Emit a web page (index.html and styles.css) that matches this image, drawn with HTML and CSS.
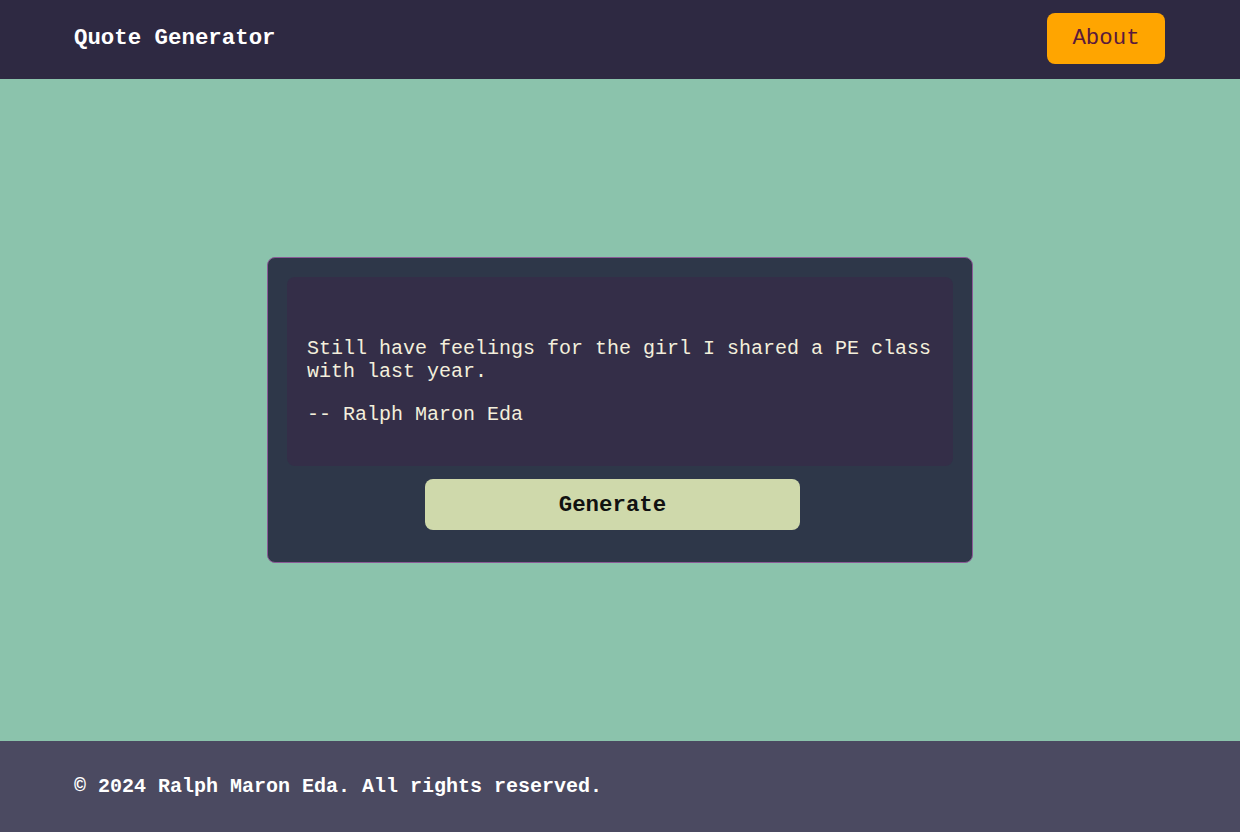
FILE: index.html
```html
<!DOCTYPE html>
<html lang="en">
<head>
<meta charset="utf-8">
<title>Quote Generator</title>
<link rel="stylesheet" href="styles.css">
</head>
<body>
<header class="topbar">
  <h1 class="brand">Quote Generator</h1>
  <button class="about-btn">About</button>
</header>
<main class="main">
  <section class="card">
    <div class="quote-box">
      <p class="quote-text">Still have feelings for the girl I shared a PE class with last year.</p>
      <p class="quote-author">-- Ralph Maron Eda</p>
    </div>
    <button class="gen-btn">Generate</button>
  </section>
</main>
<footer class="footer">
  <p class="copy">© 2024 Ralph Maron Eda. All rights reserved.</p>
</footer>
</body>
</html>
```

FILE: styles.css
```css
* { box-sizing: border-box; }
html, body { margin: 0; padding: 0; }
body {
  font-family: "Courier New", "Nimbus Mono PS", "Nimbus Mono L", "FreeMono", "Liberation Mono", monospace;
  height: 832px;
  display: flex;
  flex-direction: column;
  background: #8bc3ac;
}
.topbar {
  height: 79px;
  flex: none;
  background: #2e2942;
  display: flex;
  align-items: center;
  justify-content: space-between;
  padding: 0 75px 3px 74px;
}
.brand {
  margin: 0;
  font-size: 22.4px;
  font-weight: bold;
  color: #ffffff;
}
.about-btn {
  font-family: inherit;
  font-size: 22.4px;
  color: #5a1a3c;
  background: #ffa500;
  border: none;
  border-radius: 8px;
  width: 118px;
  height: 51px;
  padding: 0;
}
.main {
  flex: 1;
  display: flex;
  align-items: center;
  justify-content: center;
}
.card {
  width: 706px;
  height: 306px;
  background: #2e3749;
  border: 1px solid #8a5a96;
  border-radius: 8px;
  padding: 19px;
  display: flex;
  flex-direction: column;
  align-items: stretch;
}
.quote-box {
  height: 189px;
  background: #342e48;
  border-radius: 8px;
  padding: 40px 20px 20px;
}
.quote-text, .quote-author {
  margin: 20px 0 0;
  font-size: 20px;
  line-height: 23px;
  color: #f3efdc;
}
.gen-btn {
  align-self: flex-start;
  margin: 13px 0 0 138px;
  width: 375px;
  height: 51px;
  border: none;
  border-radius: 8px;
  background: #cfd9ab;
  font-family: inherit;
  font-size: 22.4px;
  font-weight: bold;
  color: #111111;
  padding: 0;
}
.footer {
  height: 91px;
  flex: none;
  background: #4b4a61;
  display: flex;
  align-items: center;
  padding: 0 74px;
}
.copy {
  margin: 0;
  font-size: 20px;
  font-weight: bold;
  color: #ffffff;
}
```
